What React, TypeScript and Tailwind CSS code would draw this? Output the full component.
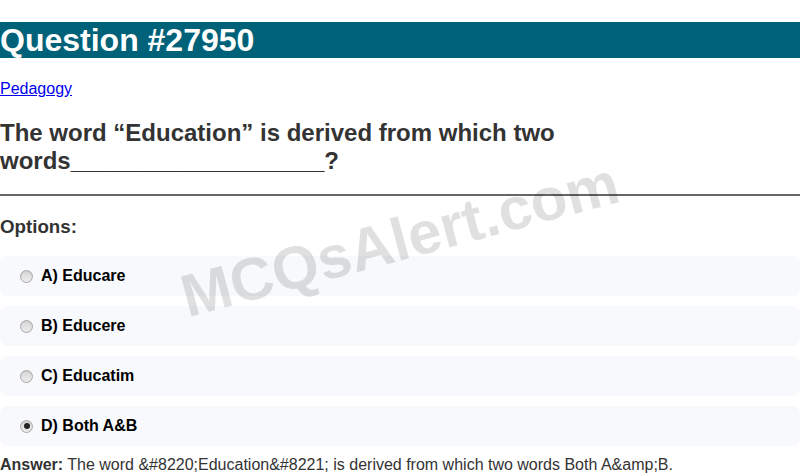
import React from "react";

const options = [
  { label: "A) Educare", checked: false },
  { label: "B) Educere", checked: false },
  { label: "C) Educatim", checked: false },
  { label: "D) Both A&B", checked: true },
];

function Radio({ checked }: { checked: boolean }) {
  return (
    <span className="relative inline-block w-[13px] h-[13px] rounded-full border border-[#a8a8a8] bg-gradient-to-b from-[#d8d8d8] to-[#ececec] shadow-[inset_0_1px_1px_rgba(0,0,0,0.08)] shrink-0">
      {checked && (
        <span className="absolute left-1/2 top-1/2 w-[6px] h-[6px] -translate-x-1/2 -translate-y-1/2 rounded-full bg-[#222]" />
      )}
    </span>
  );
}

export default function App() {
  return (
    <div className="relative w-[800px] h-[474px] overflow-hidden bg-white" style={{ fontFamily: '"Liberation Sans", Arial, sans-serif' }}>
      <div className="pt-[22px]">
        <h1 className="bg-[#006278] text-white font-bold text-[32px] leading-[36px]">Question #27950</h1>
        <p className="mt-[22px] text-[16px] leading-[18.4px]">
          <a href="#" className="text-[#0000ee] underline">Pedagogy</a>
        </p>
        <h2 className="mt-[21px] text-[24px] leading-[28px] font-bold text-[#333]">
          The word “Education” is derived from which two words___________________?
        </h2>
        <hr className="mt-[19px] border-0 border-t-2 border-[#666]" />
        <h3 className="mt-[20px] text-[18.72px] leading-[22px] font-bold text-[#333]">Options:</h3>
        <div className="mt-[18px] flex flex-col gap-[10px]">
          {options.map((o) => (
            <div key={o.label} className="h-[40px] rounded-[8px] bg-[#f8f9fc] flex items-center pl-[20px]">
              <Radio checked={o.checked} />
              <span className="ml-[8px] text-[16px] font-bold text-black">{o.label}</span>
            </div>
          ))}
        </div>
        <p className="mt-[10px] text-[16px] leading-[18.4px] text-[#333]">
          <b>Answer:</b> The word &amp;#8220;Education&amp;#8221; is derived from which two words Both A&amp;amp;B.
        </p>
      </div>
      <div className="pointer-events-none absolute left-[400px] top-[240px] -translate-x-1/2 -translate-y-1/2 -rotate-[15deg] whitespace-nowrap font-bold text-[60px] text-[rgba(0,0,0,0.12)]">
        MCQsAlert.com
      </div>
    </div>
  );
}
